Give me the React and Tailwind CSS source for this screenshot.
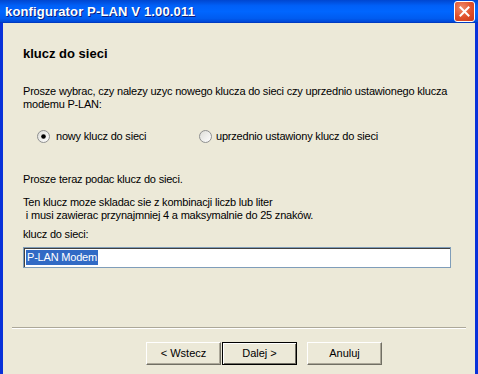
import React from "react";

function Radio({ checked }) {
  return (
    <svg width="13" height="13" viewBox="0 0 13 13" className="shrink-0">
      <defs>
        <linearGradient id={checked ? "rg1" : "rg2"} x1="0" y1="0" x2="1" y2="1">
          <stop offset="0" stopColor="#dcdcd6" />
          <stop offset="1" stopColor="#ffffff" />
        </linearGradient>
      </defs>
      <circle cx="6.5" cy="6.5" r="6" fill={`url(#${checked ? "rg1" : "rg2"})`} stroke="#8e8f8f" strokeWidth="1" />
      {checked && <circle cx="6.5" cy="6.5" r="2.3" fill="#000" />}
    </svg>
  );
}

function Btn({ children, isDefault }) {
  return (
    <div
      className={`w-[75px] h-[23px] flex items-center justify-center text-[11px] text-black bg-[#ece9d8] ${
        isDefault
          ? "border border-black shadow-[inset_1px_1px_0_#fff,inset_-1px_-1px_0_#716f64]"
          : "border border-t-white border-l-white border-b-[#716f64] border-r-[#716f64] shadow-[inset_-1px_-1px_0_#aca899]"
      }`}
    >
      {children}
    </div>
  );
}

export default function App() {
  return (
    <div
      className="w-[478px] h-[374px] overflow-hidden flex flex-col bg-[#ece9d8]"
      style={{ fontFamily: '"Liberation Sans", Arial, sans-serif' }}
    >
      <div className="h-[23px] shrink-0 flex items-center justify-between pl-[5px] pr-[3px] bg-[linear-gradient(to_bottom,#0046d0_0%,#0060f8_25%,#0066ff_50%,#005cf0_80%,#0048d8_95%,#0030b0_100%)]">
        <span className="text-white font-bold text-[13px] tracking-[0.15px] [text-shadow:1px_1px_0_#0a1e80]">
          konfigurator P-LAN V 1.00.011
        </span>
        <div className="w-[21px] h-[21px] rounded-[3px] border border-white bg-[radial-gradient(circle_at_35%_30%,#f08a6a,#e0502a_55%,#c8381a)] flex items-center justify-center">
          <svg width="11" height="11" viewBox="0 0 11 11">
            <path d="M1.5 1.5 L9.5 9.5 M9.5 1.5 L1.5 9.5" stroke="#fff" strokeWidth="2" strokeLinecap="square" />
          </svg>
        </div>
      </div>
      <div className="flex-1 flex flex-col border-l-[3px] border-r-[3px] border-[#0831d9] text-black text-[11px] leading-[13px] tracking-[-0.2px] whitespace-nowrap">
        <div className="pl-[20px] pr-[20px] pt-[23px]">
          <div className="font-bold text-[13px] leading-[16px] tracking-normal">klucz do sieci</div>
          <div className="mt-[23px]">
            Prosze wybrac, czy nalezy uzyc nowego klucza do sieci czy uprzednio ustawionego klucza
            <br />
            modemu P-LAN:
          </div>
          <div className="mt-[17px] flex items-center h-[16px]">
            <div className="flex items-center gap-[6px] pl-[14px] w-[176px]">
              <Radio checked />
              <span>nowy klucz do sieci</span>
            </div>
            <div className="flex items-center gap-[4px]">
              <Radio />
              <span>uprzednio ustawiony klucz do sieci</span>
            </div>
          </div>
          <div className="mt-[29px]">Prosze teraz podac klucz do sieci.</div>
          <div className="mt-[10px]">
            Ten klucz moze skladac sie z kombinacji liczb lub liter
            <br />
            &nbsp;i musi zawierac przynajmniej 4 a maksymalnie do 25 znaków.
          </div>
          <div className="mt-[6px]">klucz do sieci:</div>
          <div className="mt-[6px] w-[428px] h-[21px] bg-white border border-[#7f9db9] shadow-[inset_1px_1px_0_#404040] flex items-center pl-[2px]">
            <span className="bg-[#316ac5] text-white px-[1px] leading-[15px]">P-LAN Modem</span>
          </div>
        </div>
        <div className="mt-[59px] mx-[9px] h-[2px] shrink-0 border-t border-t-[#aca899] border-b border-b-white" />
        <div className="mt-[13px] flex pl-[143px] tracking-normal">
          <Btn>&lt; Wstecz</Btn>
          <div className="ml-[1px]">
            <Btn isDefault>Dalej &gt;</Btn>
          </div>
          <div className="ml-[10px]">
            <Btn>Anuluj</Btn>
          </div>
        </div>
      </div>
    </div>
  );
}
